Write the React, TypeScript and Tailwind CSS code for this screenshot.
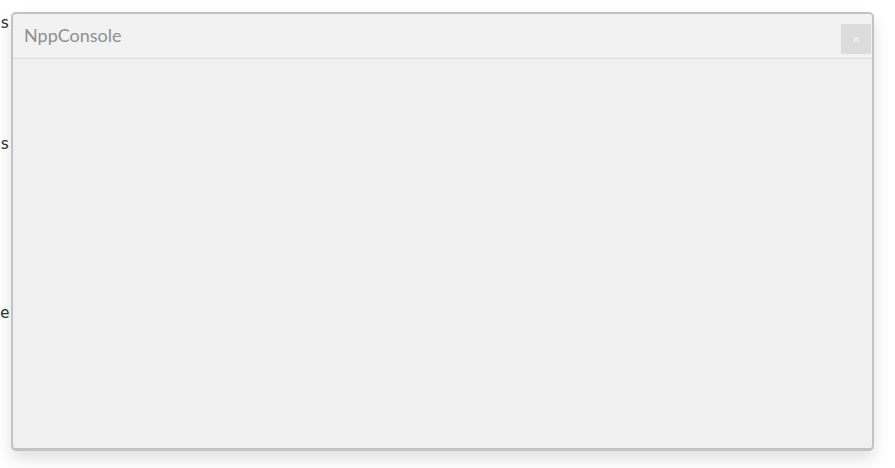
export default function App() {
  return (
    <div className="relative w-[895px] h-[468px] bg-white overflow-hidden">
      {/* page text behind the dialog */}
      <div className="flex flex-col font-['DejaVu_Sans_Mono',monospace] text-[16px] leading-[20px] text-[#333]">
        <div className="mt-[13px]">s</div>
        <div className="mt-[101px]">s</div>
        <div className="mt-[149px]">e</div>
      </div>

      {/* modal */}
      <div className="absolute left-[11px] top-[12px] w-[863px] h-[439px] flex flex-col rounded-[5px] border-2 border-b-[3px] border-[#c3c3c3] bg-[#f0f0f0] shadow-[0_8px_16px_rgba(0,0,0,0.12)]">
        <div className="flex items-start justify-between h-[45px] border-b border-[#dcdcdc] bg-[#f2f2f2] rounded-t-[4px] pl-[11px] pr-[1px]">
          <div className="mt-[8px] font-['Lato',sans-serif] text-[18px] leading-[26px] text-[#8f8f8f]">
            NppConsole
          </div>
          <button className="mt-[10px] w-[30px] h-[30px] flex items-center justify-center bg-[#dcdcdc] font-['Lato',sans-serif] text-[14px] leading-none text-[#f5f5f5]">
            ×
          </button>
        </div>
        <div className="flex-1" />
      </div>
    </div>
  );
}
